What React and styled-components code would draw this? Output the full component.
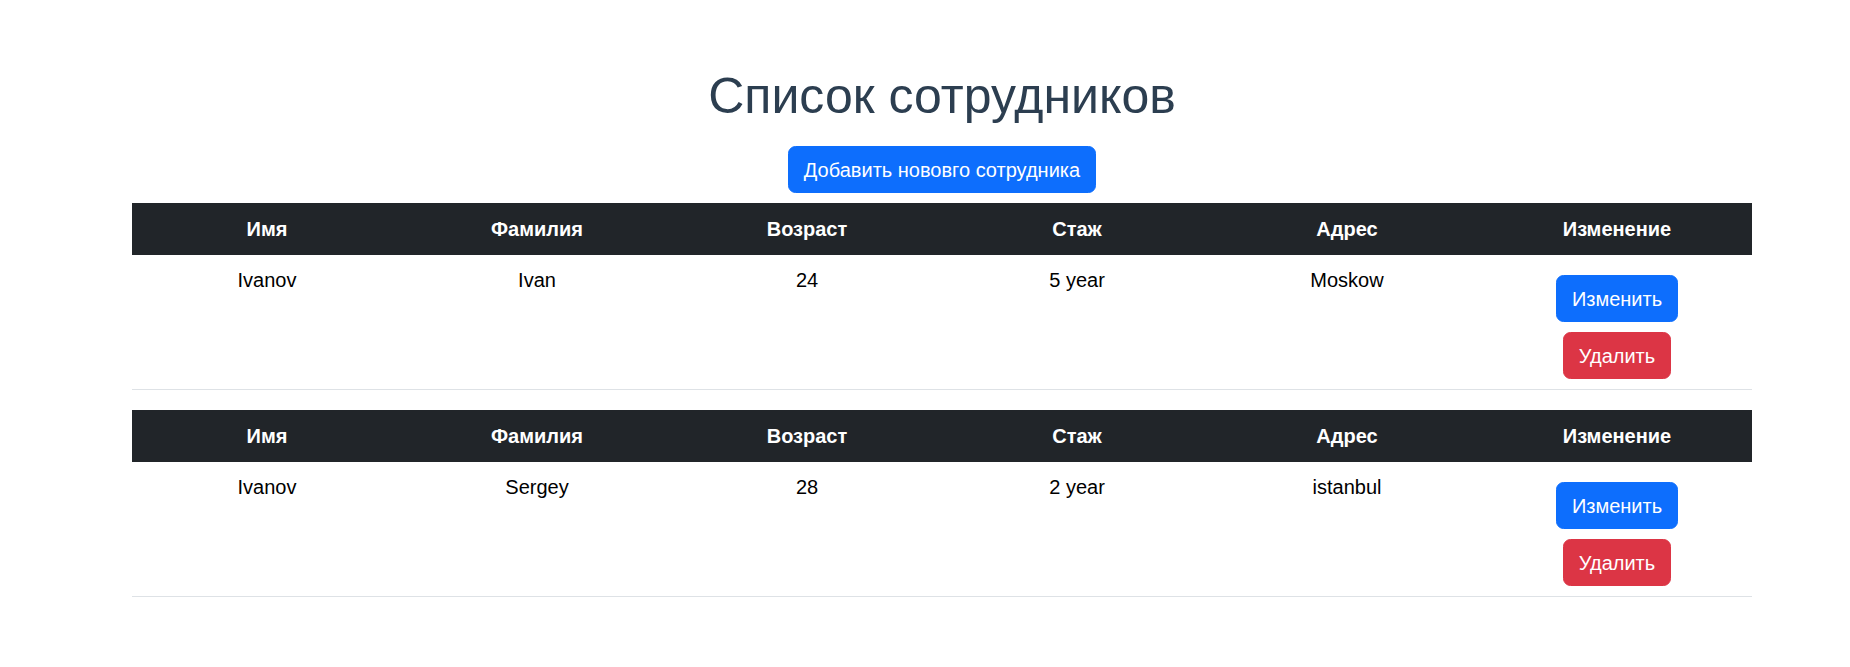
import React from "react";
import styled, { createGlobalStyle } from "styled-components";

const GlobalStyle = createGlobalStyle`
  html, body {
    margin: 0;
    padding: 0;
    background: #ffffff;
  }
  body {
    font-family: "Liberation Sans", Arial, Helvetica, sans-serif;
    font-size: 20px;
    line-height: 30px;
    color: #000;
  }
  * { box-sizing: border-box; }
`;

const Page = styled.div`
  padding: 66px 98px 40px 132px;
  text-align: center;
`;

const Title = styled.h1`
  margin: 0 0 10px;
  font-size: 50px;
  line-height: 60px;
  font-weight: 400;
  color: #2c3e50;
`;

const Button = styled.button`
  display: inline-block;
  font-family: inherit;
  font-size: 20px;
  line-height: 30px;
  font-weight: 400;
  padding: 7.5px 15px;
  border: 1px solid ${(p) => p.$bg};
  border-radius: 7.5px;
  background: ${(p) => p.$bg};
  color: #fff;
  cursor: pointer;
`;

const AddButton = styled(Button)`
  margin: 10px 0;
`;

const Table = styled.table`
  width: 100%;
  table-layout: fixed;
  border-collapse: collapse;
  margin-bottom: 20px;
`;

const HeadCell = styled.th`
  background: #212529;
  color: #fff;
  font-weight: 700;
  padding: 11px 10px;
  text-align: center;
`;

const Row = styled.tr`
  border-bottom: 1px solid #dee2e6;
`;

const Cell = styled.td`
  padding: 10px 10px;
  vertical-align: top;
  text-align: center;
  color: #000;
`;

const Actions = styled.div`
  display: flex;
  flex-direction: column;
  align-items: center;
  gap: 10px;
  padding-top: 10px;
`;

const columns = ["Имя", "Фамилия", "Возраст", "Стаж", "Адрес", "Изменение"];

const employees = [
  { last: "Ivanov", first: "Ivan", age: 24, exp: "5 year", address: "Moskow" },
  { last: "Ivanov", first: "Sergey", age: 28, exp: "2 year", address: "istanbul" },
];

function EmployeeTable({ e }) {
  return (
    <Table>
      <thead>
        <tr>
          {columns.map((c) => (
            <HeadCell key={c}>{c}</HeadCell>
          ))}
        </tr>
      </thead>
      <tbody>
        <Row>
          <Cell>{e.last}</Cell>
          <Cell>{e.first}</Cell>
          <Cell>{e.age}</Cell>
          <Cell>{e.exp}</Cell>
          <Cell>{e.address}</Cell>
          <Cell>
            <Actions>
              <Button $bg="#0d6efd">Изменить</Button>
              <Button $bg="#dc3545">Удалить</Button>
            </Actions>
          </Cell>
        </Row>
      </tbody>
    </Table>
  );
}

export default function App() {
  return (
    <>
      <GlobalStyle />
      <Page>
        <Title>Список сотрудников</Title>
        <AddButton $bg="#0d6efd">Добавить нововго сотрудника</AddButton>
        {employees.map((e, i) => (
          <EmployeeTable key={i} e={e} />
        ))}
      </Page>
    </>
  );
}
